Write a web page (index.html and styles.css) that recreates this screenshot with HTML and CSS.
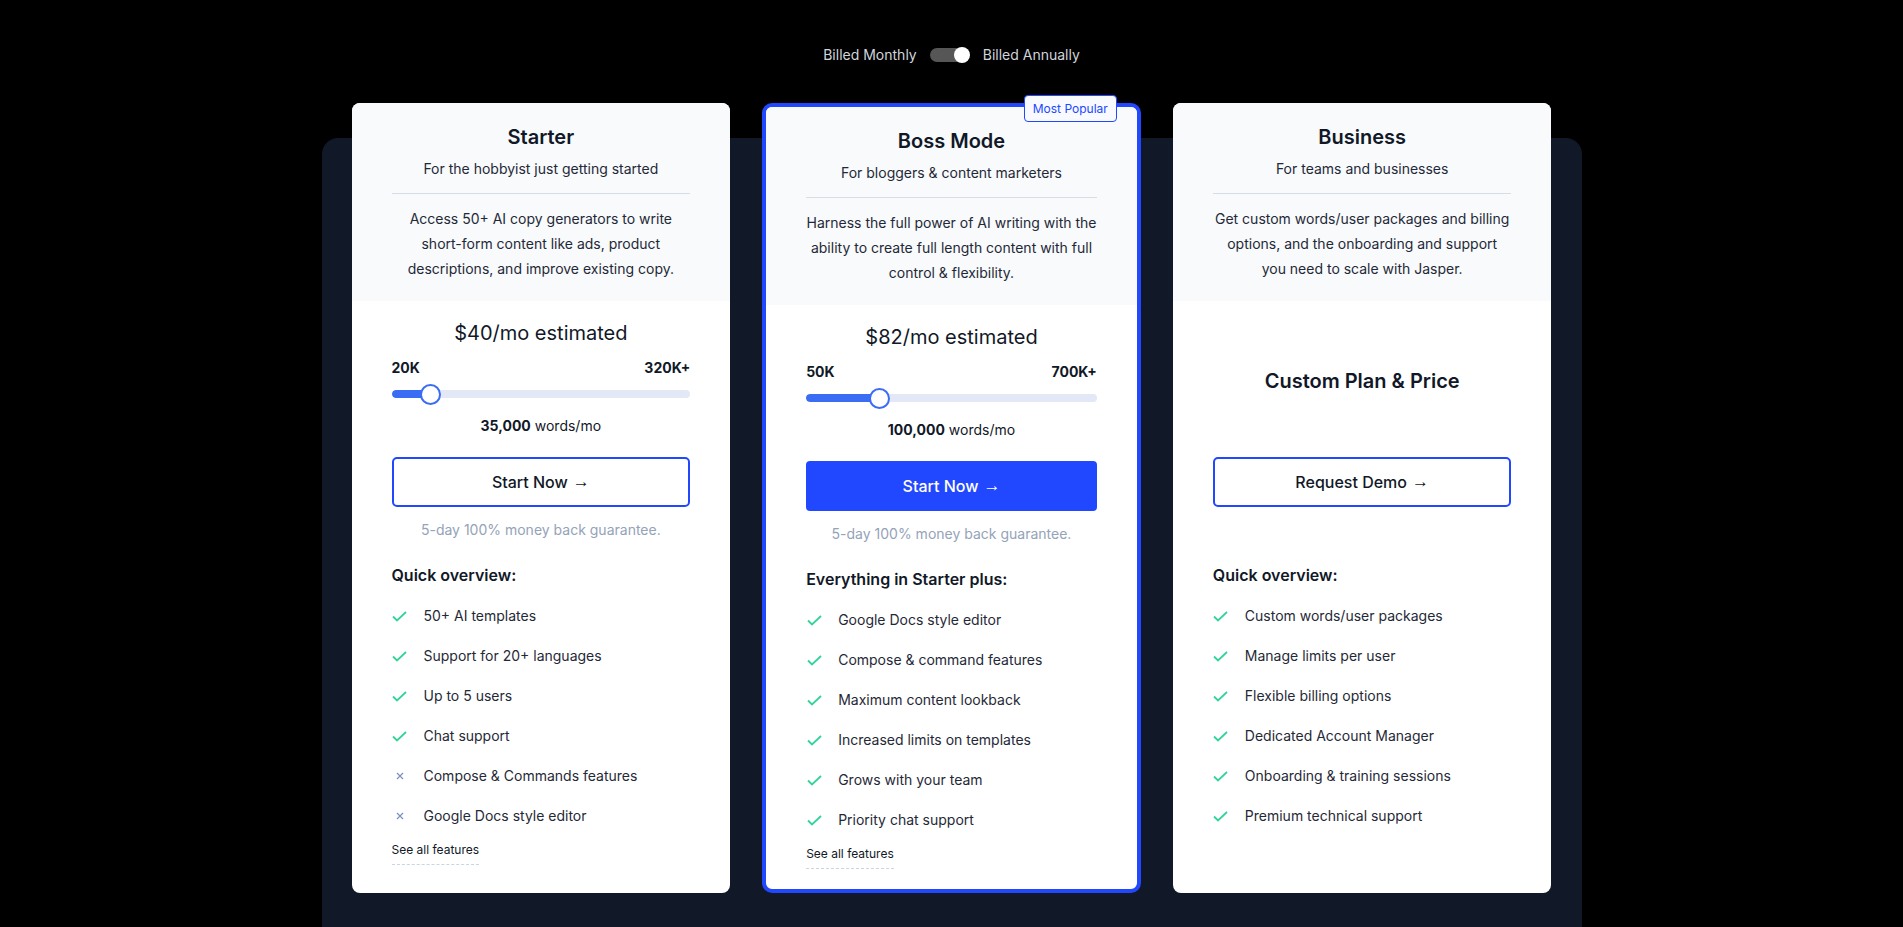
FILE: index.html
```html
<!DOCTYPE html>
<html lang="en">
<head>
<meta charset="utf-8">
<title>Pricing</title>
<link rel="stylesheet" href="styles.css">
</head>
<body>
<div class="billing">
  <span>Billed Monthly</span>
  <span class="switch"><span class="track"></span><span class="knob"></span></span>
  <span>Billed Annually</span>
</div>

<section class="panel">
  <div class="plans">

    <article class="card">
      <header class="card-head">
        <h2 class="plan-name">Starter</h2>
        <p class="plan-tag">For the hobbyist just getting started</p>
        <hr class="divider">
        <p class="plan-desc">Access 50+ AI copy generators to write<br>short-form content like ads, product<br>descriptions, and improve existing copy.</p>
      </header>
      <div class="card-body">
        <div class="price-area">
          <div class="price">$40/mo estimated</div>
          <div class="range-labels"><span>20K</span><span>320K+</span></div>
          <div class="slider">
            <div class="slider-track"><div class="slider-fill" style="width: 13%"></div></div>
            <div class="slider-thumb" style="left: 13%"></div>
          </div>
          <div class="words"><b>35,000</b> words/mo</div>
        </div>
        <a class="btn btn-outline" href="#">Start Now <span class="arrow">→</span></a>
        <p class="guarantee">5-day 100% money back guarantee.</p>
        <h3 class="list-title">Quick overview:</h3>
        <ul class="features">
          <li><span class="ico"><svg width="15" height="11" viewBox="0 0 15 11"><path d="M1 5.5 L5 9.5 L14 1" fill="none" stroke="#34d399" stroke-width="1.8"/></svg></span>50+ AI templates</li>
          <li><span class="ico"><svg width="15" height="11" viewBox="0 0 15 11"><path d="M1 5.5 L5 9.5 L14 1" fill="none" stroke="#34d399" stroke-width="1.8"/></svg></span>Support for 20+ languages</li>
          <li><span class="ico"><svg width="15" height="11" viewBox="0 0 15 11"><path d="M1 5.5 L5 9.5 L14 1" fill="none" stroke="#34d399" stroke-width="1.8"/></svg></span>Up to 5 users</li>
          <li><span class="ico"><svg width="15" height="11" viewBox="0 0 15 11"><path d="M1 5.5 L5 9.5 L14 1" fill="none" stroke="#34d399" stroke-width="1.8"/></svg></span>Chat support</li>
          <li><span class="ico"><svg width="8" height="8" viewBox="0 0 8 8"><path d="M1 1 L7 7 M7 1 L1 7" fill="none" stroke="#7d8ec2" stroke-width="1.2"/></svg></span>Compose &amp; Commands features</li>
          <li><span class="ico"><svg width="8" height="8" viewBox="0 0 8 8"><path d="M1 1 L7 7 M7 1 L1 7" fill="none" stroke="#7d8ec2" stroke-width="1.2"/></svg></span>Google Docs style editor</li>
        </ul>
        <a class="see-all" href="#">See all features</a>
      </div>
    </article>

    <article class="card card-featured">
      <span class="badge">Most Popular</span>
      <header class="card-head">
        <h2 class="plan-name">Boss Mode</h2>
        <p class="plan-tag">For bloggers &amp; content marketers</p>
        <hr class="divider">
        <p class="plan-desc">Harness the full power of AI writing with the<br>ability to create full length content with full<br>control &amp; flexibility.</p>
      </header>
      <div class="card-body">
        <div class="price-area">
          <div class="price">$82/mo estimated</div>
          <div class="range-labels"><span>50K</span><span>700K+</span></div>
          <div class="slider">
            <div class="slider-track"><div class="slider-fill" style="width: 25%"></div></div>
            <div class="slider-thumb" style="left: 25%"></div>
          </div>
          <div class="words"><b>100,000</b> words/mo</div>
        </div>
        <a class="btn btn-solid" href="#">Start Now <span class="arrow">→</span></a>
        <p class="guarantee">5-day 100% money back guarantee.</p>
        <h3 class="list-title">Everything in Starter plus:</h3>
        <ul class="features">
          <li><span class="ico"><svg width="15" height="11" viewBox="0 0 15 11"><path d="M1 5.5 L5 9.5 L14 1" fill="none" stroke="#34d399" stroke-width="1.8"/></svg></span>Google Docs style editor</li>
          <li><span class="ico"><svg width="15" height="11" viewBox="0 0 15 11"><path d="M1 5.5 L5 9.5 L14 1" fill="none" stroke="#34d399" stroke-width="1.8"/></svg></span>Compose &amp; command features</li>
          <li><span class="ico"><svg width="15" height="11" viewBox="0 0 15 11"><path d="M1 5.5 L5 9.5 L14 1" fill="none" stroke="#34d399" stroke-width="1.8"/></svg></span>Maximum content lookback</li>
          <li><span class="ico"><svg width="15" height="11" viewBox="0 0 15 11"><path d="M1 5.5 L5 9.5 L14 1" fill="none" stroke="#34d399" stroke-width="1.8"/></svg></span>Increased limits on templates</li>
          <li><span class="ico"><svg width="15" height="11" viewBox="0 0 15 11"><path d="M1 5.5 L5 9.5 L14 1" fill="none" stroke="#34d399" stroke-width="1.8"/></svg></span>Grows with your team</li>
          <li><span class="ico"><svg width="15" height="11" viewBox="0 0 15 11"><path d="M1 5.5 L5 9.5 L14 1" fill="none" stroke="#34d399" stroke-width="1.8"/></svg></span>Priority chat support</li>
        </ul>
        <a class="see-all" href="#">See all features</a>
      </div>
    </article>

    <article class="card">
      <header class="card-head">
        <h2 class="plan-name">Business</h2>
        <p class="plan-tag">For teams and businesses</p>
        <hr class="divider">
        <p class="plan-desc">Get custom words/user packages and billing<br>options, and the onboarding and support<br>you need to scale with Jasper.</p>
      </header>
      <div class="card-body">
        <div class="price-area price-custom">
          <div class="custom-price">Custom Plan &amp; Price</div>
        </div>
        <a class="btn btn-outline" href="#">Request Demo <span class="arrow">→</span></a>
        <p class="guarantee guarantee-empty"></p>
        <h3 class="list-title">Quick overview:</h3>
        <ul class="features">
          <li><span class="ico"><svg width="15" height="11" viewBox="0 0 15 11"><path d="M1 5.5 L5 9.5 L14 1" fill="none" stroke="#34d399" stroke-width="1.8"/></svg></span>Custom words/user packages</li>
          <li><span class="ico"><svg width="15" height="11" viewBox="0 0 15 11"><path d="M1 5.5 L5 9.5 L14 1" fill="none" stroke="#34d399" stroke-width="1.8"/></svg></span>Manage limits per user</li>
          <li><span class="ico"><svg width="15" height="11" viewBox="0 0 15 11"><path d="M1 5.5 L5 9.5 L14 1" fill="none" stroke="#34d399" stroke-width="1.8"/></svg></span>Flexible billing options</li>
          <li><span class="ico"><svg width="15" height="11" viewBox="0 0 15 11"><path d="M1 5.5 L5 9.5 L14 1" fill="none" stroke="#34d399" stroke-width="1.8"/></svg></span>Dedicated Account Manager</li>
          <li><span class="ico"><svg width="15" height="11" viewBox="0 0 15 11"><path d="M1 5.5 L5 9.5 L14 1" fill="none" stroke="#34d399" stroke-width="1.8"/></svg></span>Onboarding &amp; training sessions</li>
          <li><span class="ico"><svg width="15" height="11" viewBox="0 0 15 11"><path d="M1 5.5 L5 9.5 L14 1" fill="none" stroke="#34d399" stroke-width="1.8"/></svg></span>Premium technical support</li>
        </ul>
      </div>
    </article>

  </div>
</section>
</body>
</html>
```

FILE: styles.css
```css
* { box-sizing: border-box; }

html, body {
  margin: 0;
  padding: 0;
  background: #000;
  font-family: Inter, "Noto Sans", "Liberation Sans", sans-serif;
  color: #111827;
  overflow: hidden;
}

.billing {
  display: flex;
  justify-content: center;
  align-items: center;
  gap: 13px;
  padding-top: 45px;
  height: 65px;
  font-size: 14px;
  line-height: 20px;
  color: #d1d5db;
}

.switch {
  display: flex;
  align-items: center;
  width: 40px;
}

.track {
  width: 34px;
  height: 14px;
  border-radius: 7px;
  background: #565656;
}

.knob {
  width: 16px;
  height: 16px;
  border-radius: 50%;
  background: #fff;
  margin-left: -10px;
}

.panel {
  display: flow-root;
  width: 1260px;
  margin: 73px auto 0;
  padding: 0 30px 60px;
  background: #111827;
  border-radius: 16px 16px 0 0;
}

.plans {
  display: grid;
  grid-template-columns: repeat(3, 1fr);
  gap: 32px;
  margin-top: -35px;
}

.card {
  position: relative;
  display: flex;
  flex-direction: column;
  background: #fff;
  border-radius: 8px;
  height: 790px;
}

.card-featured {
  border: 4px solid #2148ff;
  border-radius: 10px;
}

.badge {
  position: absolute;
  top: -12px;
  right: 20px;
  padding: 4px 8px;
  font-size: 12px;
  line-height: 17px;
  color: #2148ff;
  background: #f8faff;
  border: 1px solid #2148ff;
  border-radius: 4px;
}

.card-head {
  background: #f8fafc;
  padding: 20px 40px 20px;
  text-align: center;
  border-radius: 8px 8px 0 0;
}

.card-featured .card-head { border-radius: 6px 6px 0 0; }

.plan-name {
  margin: 0;
  font-size: 20px;
  line-height: 28px;
  font-weight: 600;
  color: #111827;
}

.plan-tag {
  margin: 8px 0 0;
  font-size: 14px;
  line-height: 20px;
  color: #1f2937;
}

.divider {
  margin: 14px 0 0;
  border: 0;
  border-top: 1px solid #d6dde6;
  height: 0;
}

.plan-desc {
  margin: 12px 0 0;
  font-size: 14px;
  line-height: 25px;
  color: #1f2937;
}

.card-body {
  padding: 18px 40px 0;
  display: flex;
  flex-direction: column;
}

.price-area {
  height: 117px;
  display: flex;
  flex-direction: column;
}

.price {
  text-align: center;
  font-size: 20px;
  line-height: 28px;
  font-weight: 400;
  color: #111827;
}

.range-labels {
  margin-top: 11px;
  display: flex;
  justify-content: space-between;
  font-size: 14px;
  line-height: 20px;
  font-weight: 700;
  color: #111827;
}

.slider {
  position: relative;
  margin-top: 6px;
  height: 20px;
  display: flex;
  align-items: center;
}

.slider-track {
  width: 100%;
  height: 8px;
  border-radius: 4px;
  background: #e2e8f6;
  overflow: hidden;
}

.slider-fill {
  height: 100%;
  background: #3a6cf4;
  border-radius: 4px 0 0 4px;
}

.slider-thumb {
  position: absolute;
  top: 0;
  width: 21px;
  height: 21px;
  margin-left: -10px;
  border-radius: 50%;
  background: #fff;
  border: 2px solid #3a6cf4;
}

.words {
  margin-top: 12px;
  text-align: center;
  font-size: 14px;
  line-height: 20px;
  color: #111827;
}

.words b { font-weight: 700; }

.price-custom {
  justify-content: center;
  padding-top: 6px;
}

.custom-price {
  text-align: center;
  font-size: 20px;
  line-height: 28px;
  font-weight: 600;
  color: #111827;
}

.btn {
  display: flex;
  align-items: center;
  justify-content: center;
  gap: 5px;
  margin-top: 21px;
  height: 50px;
  font-size: 16px;
  font-weight: 500;
  text-decoration: none;
  border-radius: 5px;
}

.arrow {
  font-family: "Liberation Sans", "DejaVu Sans", sans-serif;
  font-weight: 400;
  font-size: 17px;
}

.btn-outline {
  border: 2px solid #2148ff;
  color: #111827;
  background: #fff;
}

.btn-solid {
  background: #2148ff;
  color: #fff;
  border-radius: 4px;
}

.guarantee {
  margin: 13px 0 0;
  height: 20px;
  text-align: center;
  font-size: 14px;
  line-height: 20px;
  color: #94a3b8;
}

.list-title {
  margin: 23px 0 0;
  font-size: 16px;
  line-height: 24px;
  font-weight: 600;
  color: #111827;
}

.features {
  list-style: none;
  margin: 19px 0 0;
  padding: 0;
  display: flex;
  flex-direction: column;
  gap: 20px;
}

.features li {
  display: flex;
  align-items: center;
  gap: 16px;
  font-size: 14px;
  line-height: 20px;
  color: #1f2937;
}

.ico {
  width: 16px;
  height: 20px;
  display: flex;
  align-items: center;
  justify-content: center;
  flex: none;
}

.see-all {
  align-self: flex-start;
  margin-top: 16px;
  padding-bottom: 6px;
  font-size: 12px;
  line-height: 16px;
  color: #111827;
  text-decoration: none;
  border-bottom: 1px dashed #cbd5e1;
}
```
